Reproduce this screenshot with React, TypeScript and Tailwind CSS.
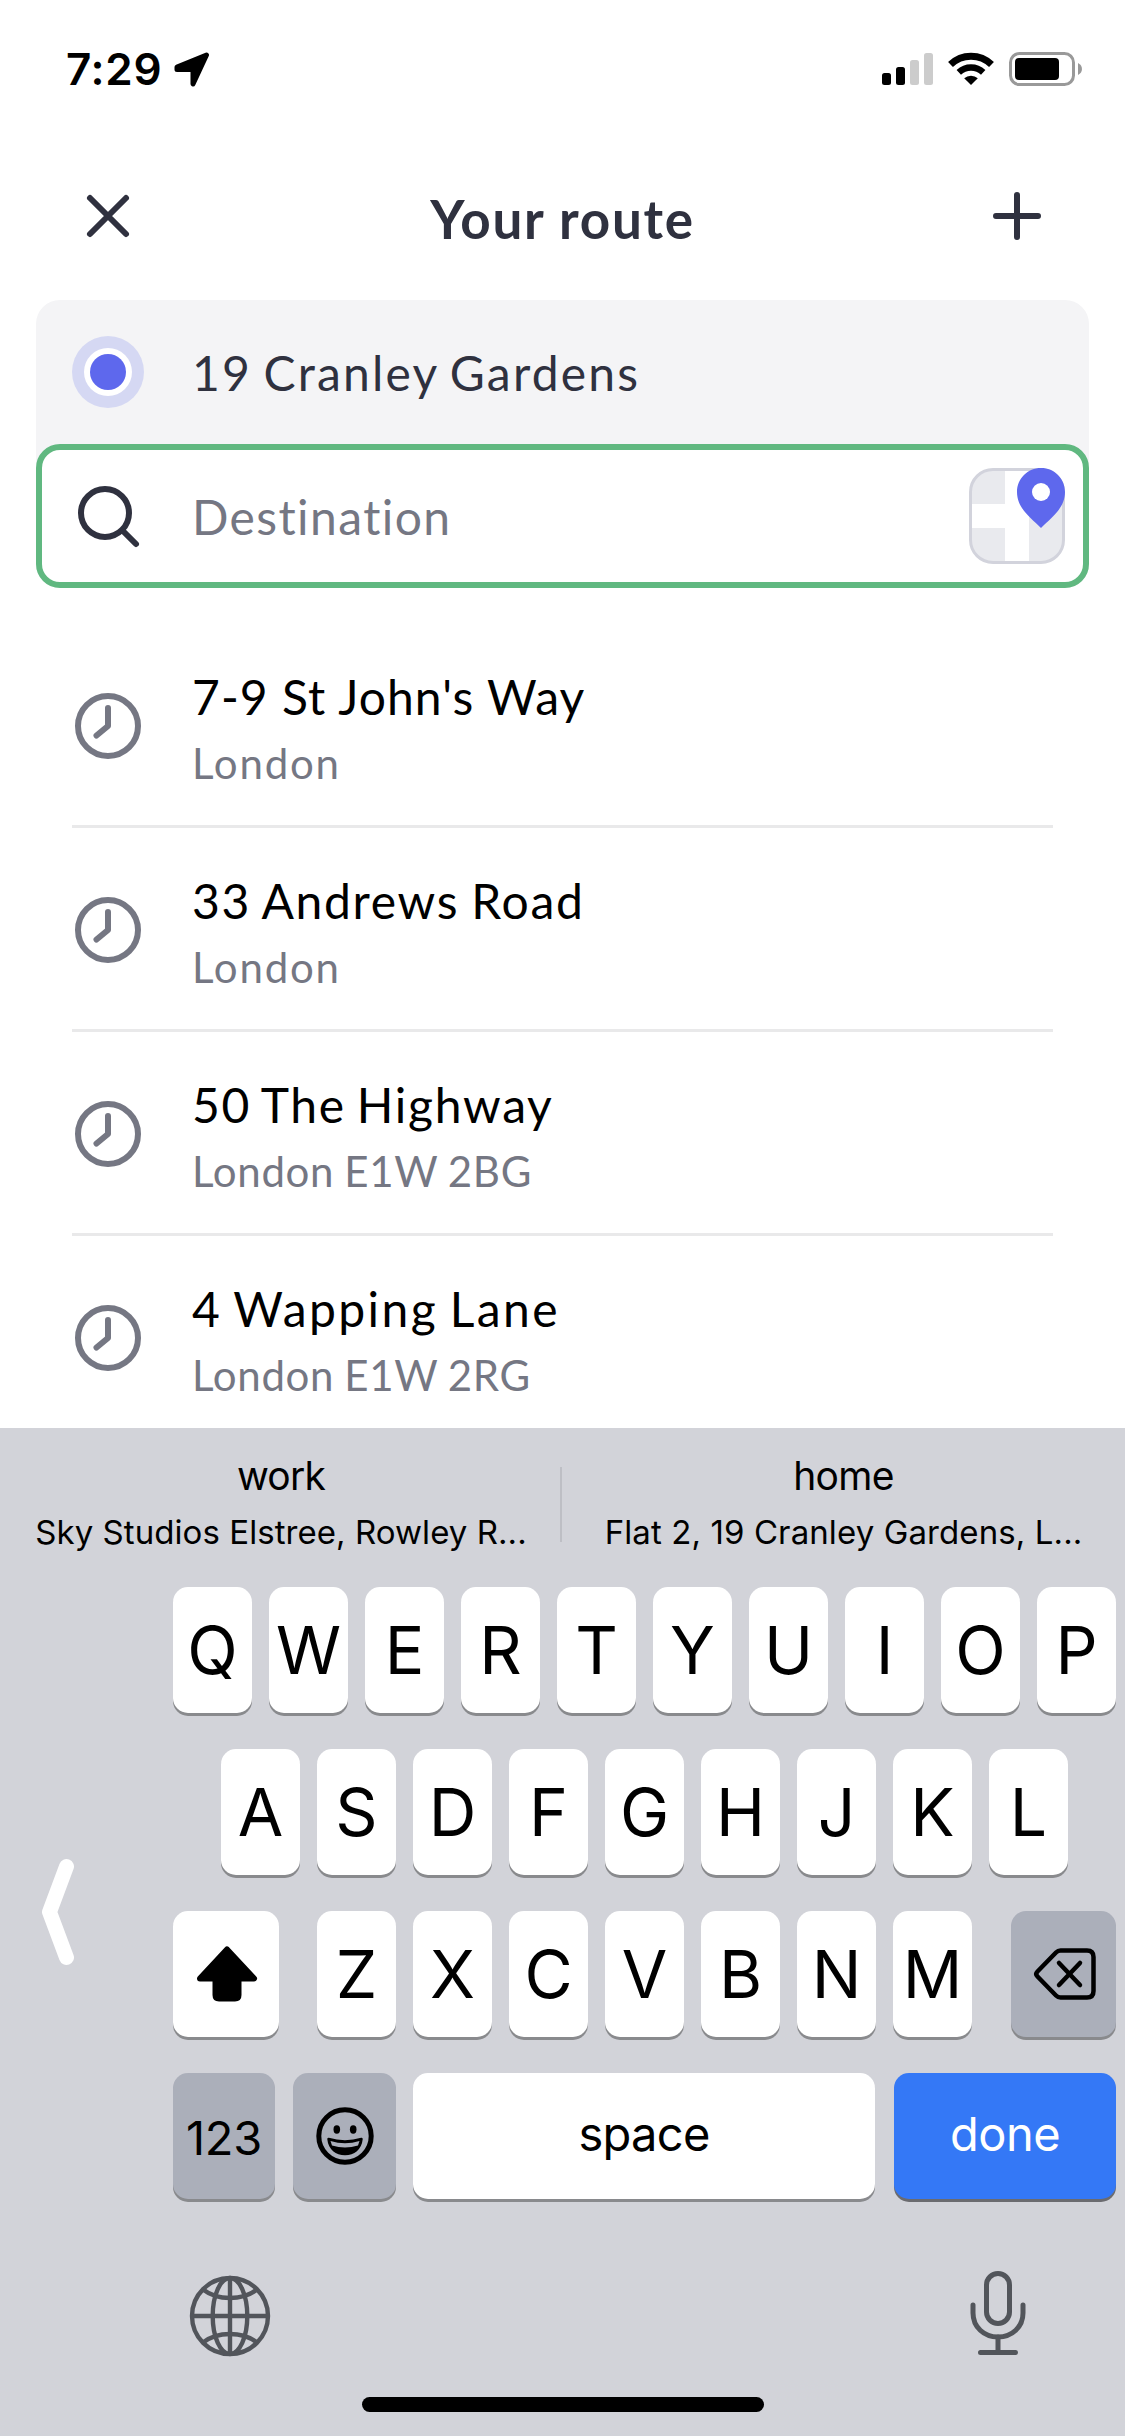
import type { ReactNode } from "react";

const recents = [
  { title: "7-9 St John's Way", area: "London", titleClass: "tracking-[1.05px]", areaClass: "tracking-[1.8px]" },
  { title: "33 Andrews Road", area: "London", titleClass: "tracking-[1.7px] [word-spacing:-2px]", areaClass: "tracking-[1.8px]" },
  {
    title: "50 The Highway",
    area: "London E1W 2BG",
    titleClass: "tracking-[1.7px] [word-spacing:-3px]",
    areaClass: "tracking-[0.7px] [word-spacing:-1.5px]",
  },
  {
    title: "4 Wapping Lane",
    area: "London E1W 2RG",
    titleClass: "tracking-[2.4px] [word-spacing:-3px]",
    areaClass: "tracking-[0.7px] [word-spacing:-1.5px]",
  },
];

const topRow = ["Q", "W", "E", "R", "T", "Y", "U", "I", "O", "P"];
const middleRow = ["A", "S", "D", "F", "G", "H", "J", "K", "L"];
const bottomRow = ["Z", "X", "C", "V", "B", "N", "M"];

function Key({ className, children }: { className: string; children: ReactNode }) {
  return (
    <button
      className={`flex h-[126px] shrink-0 items-center justify-center rounded-[15px] ${className}`}
    >
      {children}
    </button>
  );
}

function LetterKey({ letter }: { letter: string }) {
  return <Key className="w-[79px] bg-white text-[66px] shadow-[0_3px_0_#898a8d]">{letter}</Key>;
}

function StatusBar() {
  return (
    <div className="flex h-[138px] items-center justify-between pl-[66px] pr-[42px] font-['Inter',sans-serif]">
      <div className="flex items-center">
        <span className="w-[108px] text-[44px] font-semibold leading-[52px] tracking-[0.7px] text-black">7:29</span>
        <svg width="36" height="36" viewBox="0 0 36 36" className="mt-[2px]">
          <path
            d="M3 15 L32.5 3 L19 32 V17.5 H3 Z"
            fill="#000"
            stroke="#000"
            strokeWidth="5"
            strokeLinejoin="round"
          />
        </svg>
      </div>

      <div className="flex items-center">
        {/* Signal */}
        <svg width="52" height="34" viewBox="0 0 52 34">
          <rect x="0" y="21" width="9" height="12" rx="2.5" />
          <rect x="14" y="15" width="9" height="18" rx="2.5" />
          <rect x="28" y="8" width="9" height="25" rx="2.5" fill="#cccccc" />
          <rect x="42" y="1" width="9" height="32" rx="2.5" fill="#cccccc" />
        </svg>

        {/* Wifi */}
        <svg width="46" height="34" viewBox="0 0 46 34" className="ml-[14px]">
          <path d="M2.5 12.5 A29.5 29.5 0 0 1 43.5 12.5" fill="none" stroke="#000" strokeWidth="7" />
          <path d="M10.8 20.3 A18 18 0 0 1 35.2 20.3" fill="none" stroke="#000" strokeWidth="6.5" />
          <path d="M23 33 L16.2 26.3 A10 10 0 0 1 29.8 26.3 Z" />
        </svg>

        {/* Battery */}
        <svg width="74" height="34" viewBox="0 0 74 34" className="ml-[15px]">
          <rect x="1.5" y="1.5" width="63" height="31" rx="9" fill="none" stroke="#999999" strokeWidth="3" />
          <rect x="6" y="6" width="44" height="22" rx="4" />
          <path d="M69 11 C74.3 13.5 74.3 20.5 69 23 Z" fill="#999999" />
        </svg>
      </div>
    </div>
  );
}

function Header() {
  return (
    <div className="flex h-[156px] items-center justify-between px-[84px] text-[#2f313f]">
      <svg width="48" height="48" viewBox="0 0 48 48" stroke="currentColor" strokeWidth="6" strokeLinecap="round">
        <path d="M6 6 L42 42 M42 6 L6 42" />
      </svg>
      <h1 className="pt-[5px] text-[53px] font-bold leading-[64px] tracking-[1.7px]">Your route</h1>
      <svg width="48" height="48" viewBox="0 0 48 48" stroke="currentColor" strokeWidth="6" strokeLinecap="round">
        <path d="M24 3 V45 M3 24 H45" />
      </svg>
    </div>
  );
}

function RouteFields() {
  return (
    <div className="mx-9 mt-[6px] rounded-[24px] bg-[#f4f4f6]">
      <div className="flex h-[144px] items-center pl-9">
        <svg width="72" height="72" viewBox="0 0 72 72">
          <circle cx="36" cy="36" r="36" fill="#d5d8f3" />
          <circle cx="36" cy="36" r="24" fill="#fff" />
          <circle cx="36" cy="36" r="18" fill="#5e68ed" />
        </svg>
        <span className="ml-12 pt-[2px] text-[48px] leading-[60px] tracking-[2.2px] text-[#2f313f] [word-spacing:-3px]">
          19 Cranley Gardens
        </span>
      </div>

      <div className="flex h-[144px] items-center rounded-[24px] border-[6px] border-[#60b880] bg-white pl-[30px] pr-[18px]">
        <svg width="72" height="72" viewBox="0 0 72 72" fill="none" stroke="#2f313f" strokeWidth="6" strokeLinecap="round">
          <circle cx="33" cy="33" r="24" />
          <path d="M51 51 L64 64" />
        </svg>
        <span className="ml-12 flex-1 pt-[1px] text-[48px] leading-[60px] tracking-[1.4px] text-[#757783]">Destination</span>

        {/* Pick on map */}
        <svg width="96" height="96" viewBox="0 0 96 96">
          <rect x="1.5" y="1.5" width="93" height="93" rx="22.5" fill="#e9eaee" />
          <path d="M36 2 H60 V94 H36 Z M2 36 H36 V60 H2 Z" fill="#fff" />
          <rect x="1.5" y="1.5" width="93" height="93" rx="22.5" fill="none" stroke="#d2d3dc" strokeWidth="3" />
          <path
            d="M72 0 C85.3 0 96 10.5 96 24 C96 40 83 49 72 60 C61 49 48 40 48 24 C48 10.5 58.7 0 72 0 Z"
            fill="#5e68ed"
          />
          <circle cx="72" cy="24" r="9" fill="#fff" />
        </svg>
      </div>
    </div>
  );
}

function RecentList() {
  return (
    <div className="mt-9 h-[804px] overflow-hidden px-[72px]">
      {recents.map((place) => (
        <div key={place.title} className="flex h-[204px] border-b-[3px] border-[#e9e9ea]">
          <svg
            width="72"
            height="72"
            viewBox="0 0 72 72"
            fill="none"
            stroke="#757783"
            strokeWidth="6"
            strokeLinecap="round"
            strokeLinejoin="round"
            className="mt-[66px]"
          >
            <circle cx="36" cy="36" r="30" />
            <path d="M36 18 V36 L24.5 45.5" />
          </svg>
          <div className="ml-12 pt-[41px]">
            <p className={`text-[48px] leading-[64px] text-black ${place.titleClass}`}>{place.title}</p>
            <p className={`text-[42px] leading-[68px] text-[#757783] ${place.areaClass}`}>{place.area}</p>
          </div>
        </div>
      ))}
    </div>
  );
}

function Suggestions() {
  return (
    <div className="flex h-[159px] text-center text-black">
      <div className="w-[560px] pl-[2px] pt-6">
        <p className="text-[39px] leading-[48px] tracking-[-0.8px]">work</p>
        <p className="text-[33px] leading-[64px] tracking-[0.06px]">Sky Studios Elstree, Rowley R...</p>
      </div>
      <div className="mt-[39px] h-[75px] w-[2px] bg-[#bebfc5]" />
      <div className="flex-1 pt-6">
        <p className="text-[39px] leading-[48px] tracking-[-0.7px]">home</p>
        <p className="text-[33px] leading-[64px] tracking-[0.1px]">Flat 2, 19 Cranley Gardens, L...</p>
      </div>
    </div>
  );
}

function Keyboard() {
  return (
    <div className="h-[1008px] bg-[#d2d3d9] font-['Inter',sans-serif] text-black">
      <Suggestions />

      <div className="flex">
        {/* One-handed mode handle */}
        <div className="flex w-[173px] shrink-0 items-center">
          <svg width="40" height="108" viewBox="0 0 40 108" className="ml-[38px] mt-[38px]">
            <path
              d="M28.5 8.5 L11.5 54 L28.5 99.5"
              fill="none"
              stroke="#fff"
              strokeWidth="15"
              strokeLinecap="round"
              strokeLinejoin="round"
            />
          </svg>
        </div>

        <div className="flex flex-1 flex-col gap-9">
          <div className="flex gap-[17px]">
            {topRow.map((letter) => (
              <LetterKey key={letter} letter={letter} />
            ))}
          </div>

          <div className="flex gap-[17px] pl-12">
            {middleRow.map((letter) => (
              <LetterKey key={letter} letter={letter} />
            ))}
          </div>

          <div className="flex">
            <Key className="w-[106px] bg-white shadow-[0_3px_0_#898a8d]">
              <svg width="62" height="56" viewBox="0 0 62 56" className="ml-[2px]">
                <path
                  d="M31 3.5 L58 32.5 H42.5 V49 Q42.5 52.5 39 52.5 H23 Q19.5 52.5 19.5 49 V32.5 H4 Z"
                  stroke="#000"
                  strokeWidth="6"
                  strokeLinejoin="round"
                />
              </svg>
            </Key>
            <div className="ml-[38px] flex gap-[17px]">
              {bottomRow.map((letter) => (
                <LetterKey key={letter} letter={letter} />
              ))}
            </div>
            <Key className="ml-[39px] w-[105px] bg-[#abafba] shadow-[0_3px_0_#898a8d]">
              <svg
                width="64"
                height="54"
                viewBox="0 0 64 54"
                fill="none"
                stroke="#000"
                strokeWidth="4.5"
                strokeLinecap="round"
                strokeLinejoin="round"
                className="ml-[3px]"
              >
                <path d="M27.5 3.5 H54 Q60.5 3.5 60.5 10 V44 Q60.5 50.5 54 50.5 H27.5 Q25 50.5 23 48.5 L4.5 29.5 Q2 27 4.5 24.5 L23 5.5 Q25 3.5 27.5 3.5 Z" />
                <path d="M26 16 L47 38 M47 16 L26 38" />
              </svg>
            </Key>
          </div>

          <div className="flex">
            <Key className="w-[102px] bg-[#abafba] pt-[4px] text-[47px] tracking-[-0.2px] shadow-[0_3px_0_#898a8d]">
              123
            </Key>
            <Key className="ml-[18px] w-[103px] bg-[#abafba] shadow-[0_3px_0_#898a8d]">
              <svg width="60" height="60" viewBox="0 0 60 60">
                <circle cx="30" cy="30" r="26.2" fill="none" stroke="#000" strokeWidth="5" />
                <ellipse cx="21.8" cy="23.5" rx="3.3" ry="4.2" />
                <ellipse cx="38.2" cy="23.5" rx="3.3" ry="4.2" />
                <path
                  d="M13.5 33 Q30 38 46.5 33 C45.5 43 38.5 48 30 48 C21.5 48 14.5 43 13.5 33 Z"
                  stroke="#000"
                  strokeWidth="2.5"
                  strokeLinejoin="round"
                />
                <path d="M15.5 35 Q30 39.5 44.5 35 L43 39.5 Q30 43.5 17 39.5 Z" fill="#abafba" />
              </svg>
            </Key>
            <Key className="ml-[17px] w-[462px] bg-white pb-[3px] text-[47px] tracking-[-0.7px] shadow-[0_3px_0_#898a8d]">
              space
            </Key>
            <Key className="ml-[19px] w-[222px] bg-[#3478f6] pb-[3px] text-[47px] tracking-[-0.5px] text-white shadow-[0_3px_0_#6b6b6f]">
              done
            </Key>
          </div>
        </div>
      </div>

      <div className="flex justify-between pl-[188px] pr-[91px] pt-[68px] text-[#52555b]">
        <svg width="84" height="92" viewBox="0 0 84 92" fill="none" stroke="currentColor" strokeWidth="4.4">
          <circle cx="42" cy="49" r="38" />
          <ellipse cx="42" cy="49" rx="17.3" ry="38" />
          <path d="M42 11 V87 M4 49 H80" />
          <path d="M15 22.5 Q26 31 42 31 Q58 31 69 22.5" />
          <path d="M15 75.5 Q26 67 42 67 Q58 67 69 75.5" />
        </svg>
        <svg
          width="72"
          height="92"
          viewBox="0 0 72 92"
          fill="none"
          stroke="currentColor"
          strokeWidth="5"
          strokeLinecap="round"
        >
          <rect x="24.5" y="6.5" width="23" height="50" rx="11.5" />
          <path d="M11 38 V46 C11 60 22 70 36 70 C50 70 61 60 61 46 V38" />
          <path d="M36 70 V85 M18.5 85.5 H53.5" />
        </svg>
      </div>

      {/* Home indicator */}
      <div className="mx-auto mt-[38px] h-[15px] w-[402px] rounded-full bg-black" />
    </div>
  );
}

export default function App() {
  return (
    <div className="h-[2436px] w-[1125px] overflow-hidden bg-white font-['Lato',sans-serif]">
      <StatusBar />
      <Header />
      <RouteFields />
      <RecentList />
      <Keyboard />
    </div>
  );
}
